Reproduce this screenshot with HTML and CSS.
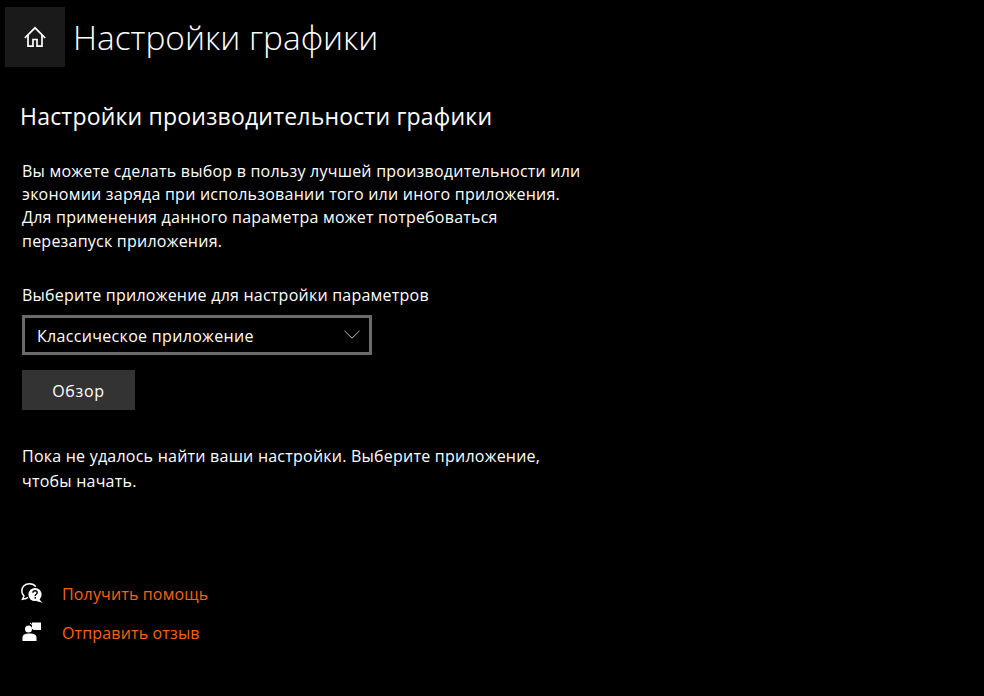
FILE: index.html
```html
<!DOCTYPE html>
<html lang="ru">
<head>
<meta charset="utf-8">
<title>Настройки графики</title>
<link rel="stylesheet" href="styles.css">
</head>
<body>
<header class="titlebar">
  <button class="home" aria-label="Домой">
    <svg width="22" height="22" viewBox="0 0 22 22" fill="none" stroke="#fff" stroke-width="1.7"><path d="M.8 12 11 1.800 21.200 12"/><path d="M4 9v11.200h5v-6.700h4v6.700h5V9"/></svg>
  </button>
  <h1 class="page-title">Настройки графики</h1>
</header>
<main class="content">
  <h2 class="section-title">Настройки производительности графики</h2>
  <p class="text intro">Вы можете сделать выбор в пользу лучшей производительности или<br>экономии заряда при использовании того или иного приложения.<br>Для применения данного параметра может потребоваться<br>перезапуск приложения.</p>
  <label class="text label">Выберите приложение для настройки параметров</label>
  <div class="select">
    <span class="select-value">Классическое приложение</span>
    <svg class="chevron" width="16" height="9" viewBox="0 0 16 9" fill="none" stroke="#bbb" stroke-width="1"><path d="M.5.8 8 8.2 15.500.8"/></svg>
  </div>
  <button class="browse">Обзор</button>
  <p class="text notice">Пока не удалось найти ваши настройки. Выберите приложение,<br>чтобы начать.</p>
  <ul class="links">
    <li class="link-row">
      <svg class="link-icon" width="24" height="24" viewBox="0 0 24 24"><path d="M8 15.400 6 16.500 2.500 17.300l1.500-3.300C2.700 12.800 1.800 11 1.800 9 1.800 4.800 5 1.800 9.500 1.800c2.800 0 5 1.100 6.300 2.800" fill="none" stroke="#fff" stroke-width="1.500"/><circle cx="15" cy="12.500" r="6.600" fill="#fff"/><path d="M19 17l3.500 3.700-6.500-1.700z" fill="#fff"/><path d="M12.800 10.700c.2-2.600 4.400-2.600 4.400 0 0 1.600-2 1.600-2 3.200" fill="none" stroke="#000" stroke-width="1.400"/><rect x="14.500" y="15" width="1.500" height="1.600" fill="#000"/></svg>
      <a class="link">Получить помощь</a>
    </li>
    <li class="link-row">
      <svg class="link-icon" width="24" height="24" viewBox="0 0 24 24"><path d="M12 1.500H21V9H13.500L12 7.500z" fill="#fff"/><path d="M12.500 4 10 2" stroke="#fff" stroke-width="1" fill="none"/><circle cx="8.500" cy="8" r="3.500" fill="#fff"/><path d="M2.500 20v-3.500C2.500 13.700 5 12.500 9.500 12.500s7 1.200 7 4V20z" fill="#fff"/></svg>
      <a class="link">Отправить отзыв</a>
    </li>
  </ul>
</main>
</body>
</html>
```
FILE: styles.css
```css
* { box-sizing: border-box; }
html, body { margin: 0; padding: 0; height: 100%; }
body {
  background: #000;
  color: #fff;
  font-family: "Open Sans", "Noto Sans", sans-serif;
  overflow: hidden;
}
.titlebar { display: flex; align-items: center; padding: 7px 0 0 5px; gap: 8px; }
.home {
  width: 60px; height: 60px; border: 0; padding: 0;
  background: #1a1a1a;
  display: flex; align-items: center; justify-content: center;
}
.page-title { margin: 0; font-size: 33.4px; font-weight: 300; line-height: 60px; }
.content { padding: 0 0 0 22px; }
.section-title { margin: 29px 0 0 -2px; font-size: 23px; font-weight: 400; line-height: 40px; letter-spacing: 0.2px; }
.text { font-size: 16px; line-height: 23.4px; margin: 0; letter-spacing: 0.23px; }
.intro { margin-top: 23.5px; }
.label { display: block; margin-top: 30.9px; }
.select {
  width: 350px; height: 40px; margin-top: 8px;
  border: 3px solid #6b6b6b;
  display: flex; align-items: center; justify-content: space-between;
  padding: 2px 9px 0 12px;
}
.chevron { margin-top: -3px; }
.select-value { font-size: 16px; letter-spacing: 0.32px; }
.browse {
  display: block; width: 113px; height: 40px; margin-top: 15px; border: 0; padding: 2px 0 0;
  background: #333; color: #fff;
  font: inherit; font-size: 16px; letter-spacing: 0.7px;
}
.notice { margin-top: 34px; line-height: 25px; }
.links { list-style: none; margin: 85px 0 0; padding: 0; display: flex; flex-direction: column; gap: 9px; }
.link-row { display: flex; align-items: center; gap: 18px; height: 30px; margin-left: -2px; }
.link { color: #f7630c; font-size: 16px; letter-spacing: 0.15px; }
```
